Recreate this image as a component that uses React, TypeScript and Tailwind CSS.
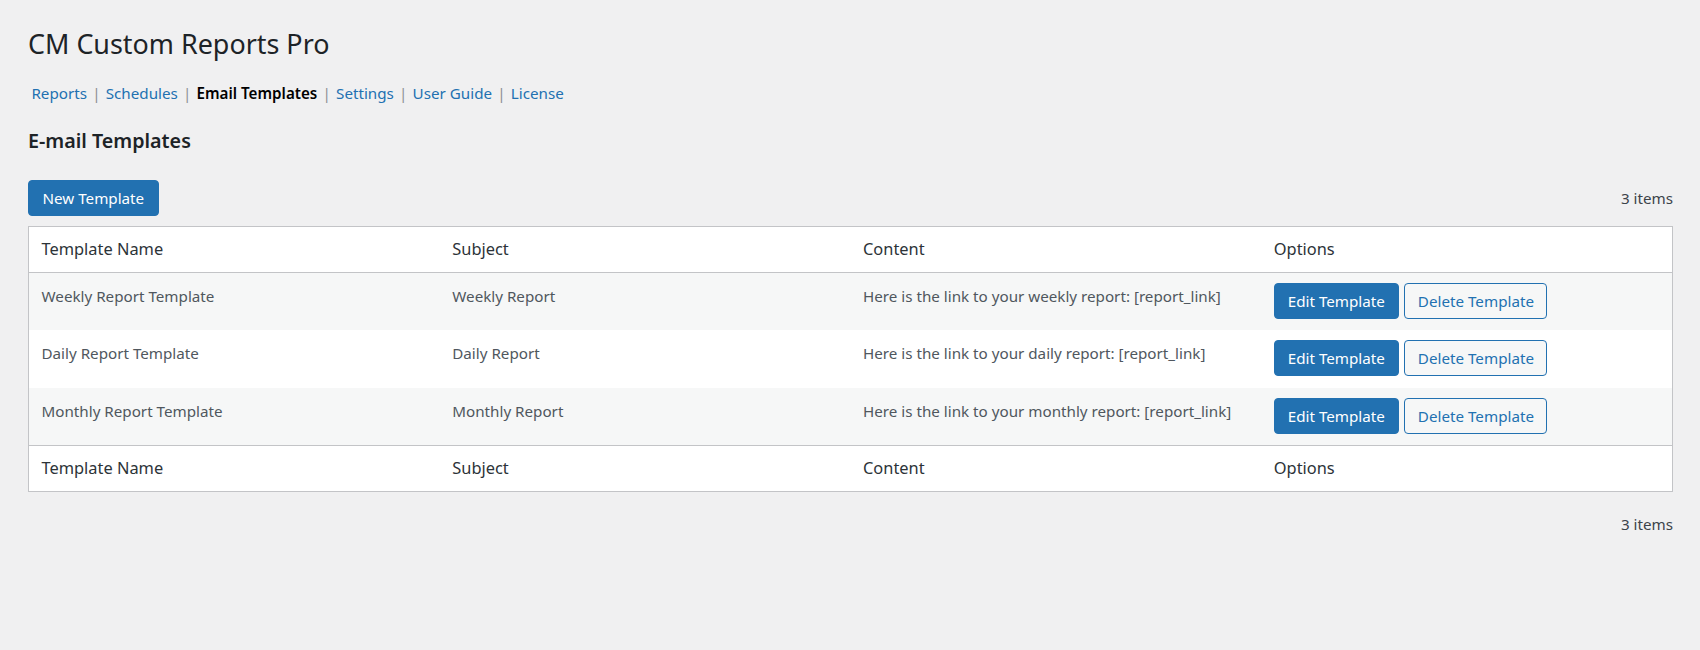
import React from "react";

const rows = [
  { name: "Weekly Report Template", subject: "Weekly Report", content: "Here is the link to your weekly report: [report_link]" },
  { name: "Daily Report Template", subject: "Daily Report", content: "Here is the link to your daily report: [report_link]" },
  { name: "Monthly Report Template", subject: "Monthly Report", content: "Here is the link to your monthly report: [report_link]" },
];

const headers = ["Template Name", "Subject", "Content", "Options"];

function HeadRow({ footer }: { footer?: boolean }) {
  return (
    <div
      className={
        "grid grid-cols-4 h-[46px] bg-white " +
        (footer ? "border-t border-[#c3c4c7]" : "border-b border-[#c3c4c7]")
      }
    >
      {headers.map((h) => (
        <div key={h} className="px-[12.5px] pt-[10px] text-[16.4px] leading-[24.5px] text-[#2c3338]">
          {h}
        </div>
      ))}
    </div>
  );
}

export default function App() {
  const nav = ["Reports", "Schedules", "Email Templates", "Settings", "User Guide", "License"];
  return (
    <div className="min-h-[650px] bg-[#f0f0f1] pl-[28px] pr-[27px] font-['Noto_Sans',sans-serif]">
      <h1 className="pt-[25px] text-[26.9px] leading-[37px] font-normal text-[#1d2327]">CM Custom Reports Pro</h1>

      <div className="mt-[19px] flex items-center h-[24px] text-[15.2px] leading-[24px]">
        {nav.map((n, i) => (
          <React.Fragment key={n}>
            {n === "Email Templates" ? (
              <span className="px-[3.4px] font-semibold text-black">{n}</span>
            ) : (
              <a href="#" className="px-[3.4px] text-[#2271b1]">
                {n}
              </a>
            )}
            {i < nav.length - 1 && <span className="mx-[1.8px] text-[#8c8f94]">|</span>}
          </React.Fragment>
        ))}
      </div>

      <h2 className="mt-[22px] text-[19.7px] leading-[28px] font-semibold text-[#1d2327]">E-mail Templates</h2>

      <div className="mt-[24.6px] flex items-center justify-between">
        <button className="h-[36.4px] px-[13.5px] rounded-[4px] bg-[#2271b1] border border-[#2271b1] text-white text-[15.2px] leading-[24px]">
          New Template
        </button>
        <span className="text-[15.2px] leading-[24px] text-[#3c434a]">3 items</span>
      </div>

      <div className="mt-[9.6px] border border-[#c3c4c7] bg-white">
        <HeadRow />
        {rows.map((r, i) => (
          <div key={r.name} className={"grid grid-cols-4 h-[57.5px] " + (i % 2 === 0 ? "bg-[#f6f7f7]" : "bg-white")}>
            <div className="px-[12.5px] pt-[11px] text-[15.2px] leading-[24px] text-[#50575e]">{r.name}</div>
            <div className="px-[12.5px] pt-[11px] text-[15.2px] leading-[24px] text-[#50575e]">{r.subject}</div>
            <div className="px-[12.5px] pt-[11px] text-[15.2px] leading-[24px] text-[#50575e] whitespace-nowrap">{r.content}</div>
            <div className="px-[12.5px] pt-[10px] flex items-start gap-[5.5px]">
              <button className="h-[36.4px] px-[13px] rounded-[4px] bg-[#2271b1] border border-[#2271b1] text-white text-[15.2px] leading-[24px] whitespace-nowrap">
                Edit Template
              </button>
              <button className="h-[36.4px] px-[12.5px] rounded-[4px] bg-[#f6f7f7] border border-[#2271b1] text-[#2271b1] text-[15.2px] leading-[24px] whitespace-nowrap">
                Delete Template
              </button>
            </div>
          </div>
        ))}
        <HeadRow footer />
      </div>

      <div className="mt-[20.3px] flex justify-end">
        <span className="text-[15.2px] leading-[24px] text-[#3c434a]">3 items</span>
      </div>
    </div>
  );
}
